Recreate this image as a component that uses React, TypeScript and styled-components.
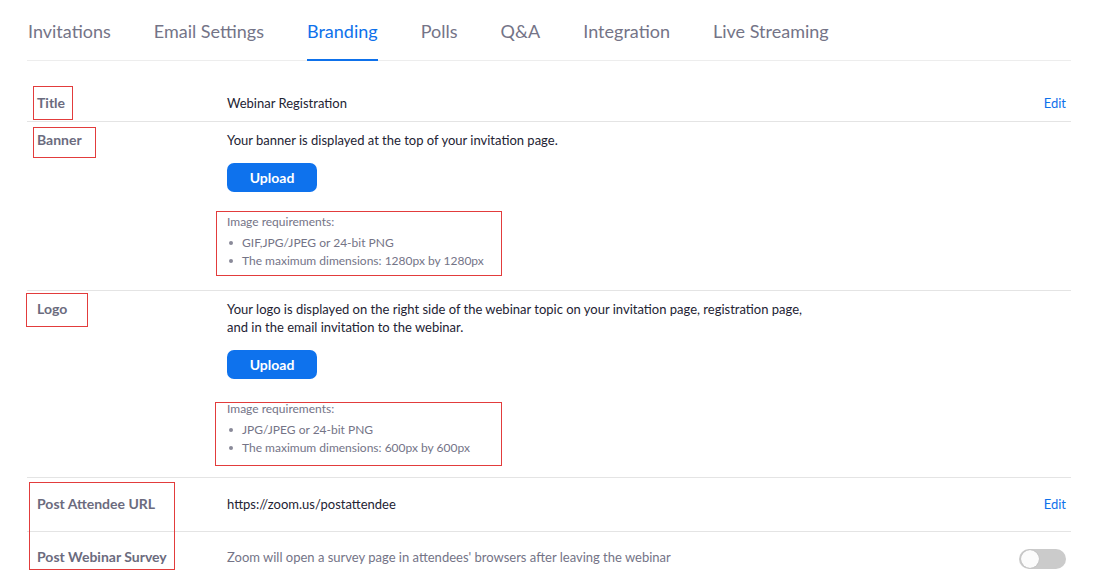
import React from "react";
import styled, { createGlobalStyle } from "styled-components";

const GlobalStyle = createGlobalStyle`
    body {
        margin: 0;
        background: #fff;
        font-family: Lato, "Open Sans", sans-serif;
        -webkit-font-smoothing: antialiased;
    }
`;

const Sheet = styled.div`
    position: relative;
    width: 1104px;
    height: 584px;
    overflow: hidden;
    padding-left: 27px;
    box-sizing: border-box;
`;

const Panel = styled.div`
    width: 1044px;
`;

const TabBar = styled.div`
    display: flex;
    gap: 43px;
    padding-left: 1px;
    border-bottom: 1px solid #ededed;
`;

const Tab = styled.div<{ $active?: boolean }>`
    padding: 20px 0 17px;
    font-size: 18px;
    line-height: 22px;
    color: ${(p) => (p.$active ? "#0e71eb" : "#747487")};
    border-bottom: 2px solid ${(p) => (p.$active ? "#0e71eb" : "transparent")};
    margin-bottom: -1px;
`;

const Table = styled.div`
    margin-top: 24px;
`;

const Row = styled.div<{ $top?: number; $bottom?: number; $last?: boolean }>`
    display: grid;
    grid-template-columns: 190px 1fr auto;
    align-items: start;
    padding: ${(p) => p.$top ?? 9}px 5px ${(p) => p.$bottom ?? 9}px 10px;
    border-bottom: ${(p) => (p.$last ? "none" : "1px solid #e4e4e4")};
`;

const Label = styled.div`
    font-size: 14px;
    font-weight: 700;
    line-height: 18px;
    color: #6b6b7e;
`;

const Cell = styled.div`
    display: flex;
    flex-direction: column;
    align-items: flex-start;
`;

const Text = styled.div<{ $muted?: boolean; $wrap?: number }>`
    font-size: 13px;
    line-height: 18px;
    color: ${(p) => (p.$muted ? "#747487" : "#232333")};
    max-width: ${(p) => (p.$wrap ? `${p.$wrap}px` : "none")};
`;

const UploadButton = styled.button`
    margin-top: 14px;
    width: 90px;
    height: 29px;
    border: none;
    border-radius: 7px;
    background: #0e72ed;
    color: #fff;
    font-family: inherit;
    font-size: 14px;
    font-weight: 700;
    padding: 0;
`;

const Requirements = styled.div`
    margin: 21px 0 11px;
    font-size: 12px;
    line-height: 18px;
    color: #747487;
`;

const ReqList = styled.ul`
    list-style: none;
    margin: 3px 0 0;
    padding: 0;
`;

const ReqItem = styled.li`
    display: flex;
    align-items: center;
    &::before {
        content: "";
        width: 4px;
        height: 4px;
        border-radius: 50%;
        background: #8a8a99;
        margin: 0 9px 0 2px;
    }
`;

const EditLink = styled.a`
    font-size: 13px;
    line-height: 18px;
    color: #0e71eb;
    text-decoration: none;
`;

const Toggle = styled.div`
    margin-top: 1px;
    width: 47px;
    height: 20px;
    border-radius: 10px;
    background: #cbcbcb;
    display: flex;
    align-items: center;
    padding-left: 2px;
    box-sizing: border-box;
    &::after {
        content: "";
        width: 18px;
        height: 18px;
        border-radius: 50%;
        background: #fbfbfb;
        box-shadow: 0 0 1px rgba(0, 0, 0, 0.25);
    }
`;

// red review marks drawn over the screenshot
const Mark = styled.div`
    position: absolute;
    box-sizing: border-box;
    border: 1px solid #e23c3c;
    pointer-events: none;
`;

const marks = [
    { x: 33, y: 86, w: 40, h: 34 },
    { x: 33, y: 127, w: 63, h: 31 },
    { x: 216, y: 211, w: 286, h: 65 },
    { x: 26, y: 293, w: 62, h: 34 },
    { x: 215, y: 402, w: 287, h: 64 },
    { x: 29, y: 482, w: 146, h: 88 },
];

const tabs = ["Invitations", "Email Settings", "Branding", "Polls", "Q&A", "Integration", "Live Streaming"];

const Requirement = ({ items }: { items: string[] }) => (
    <Requirements>
        Image requirements:
        <ReqList>
            {items.map((item) => (
                <ReqItem key={item}>{item}</ReqItem>
            ))}
        </ReqList>
    </Requirements>
);

export default function App() {
    return (
        <Sheet>
            <GlobalStyle />
            <Panel>
                <TabBar>
                    {tabs.map((t) => (
                        <Tab key={t} $active={t === "Branding"}>{t}</Tab>
                    ))}
                </TabBar>
                <Table>
                    <Row>
                        <Label>Title</Label>
                        <Text>Webinar Registration</Text>
                        <EditLink href="#">Edit</EditLink>
                    </Row>
                    <Row>
                        <Label>Banner</Label>
                        <Cell>
                            <Text>Your banner is displayed at the top of your invitation page.</Text>
                            <UploadButton>Upload</UploadButton>
                            <Requirement items={["GIF,JPG/JPEG or 24-bit PNG", "The maximum dimensions: 1280px by 1280px"]} />
                        </Cell>
                    </Row>
                    <Row>
                        <Label>Logo</Label>
                        <Cell>
                            <Text $wrap={590}>
                                Your logo is displayed on the right side of the webinar topic on your invitation page, registration page, and in the email invitation to the webinar.
                            </Text>
                            <UploadButton>Upload</UploadButton>
                            <Requirement items={["JPG/JPEG or 24-bit PNG", "The maximum dimensions: 600px by 600px"]} />
                        </Cell>
                    </Row>
                    <Row $top={17} $bottom={18}>
                        <Label>Post Attendee URL</Label>
                        <Text>https://zoom.us/postattendee</Text>
                        <EditLink href="#">Edit</EditLink>
                    </Row>
                    <Row $top={16} $bottom={16} $last>
                        <Label>Post Webinar Survey</Label>
                        <Text $muted>Zoom will open a survey page in attendees' browsers after leaving the webinar</Text>
                        <Toggle />
                    </Row>
                </Table>
            </Panel>
            {marks.map((m, i) => (
                <Mark key={i} style={{ left: m.x, top: m.y, width: m.w, height: m.h }} />
            ))}
        </Sheet>
    );
}
